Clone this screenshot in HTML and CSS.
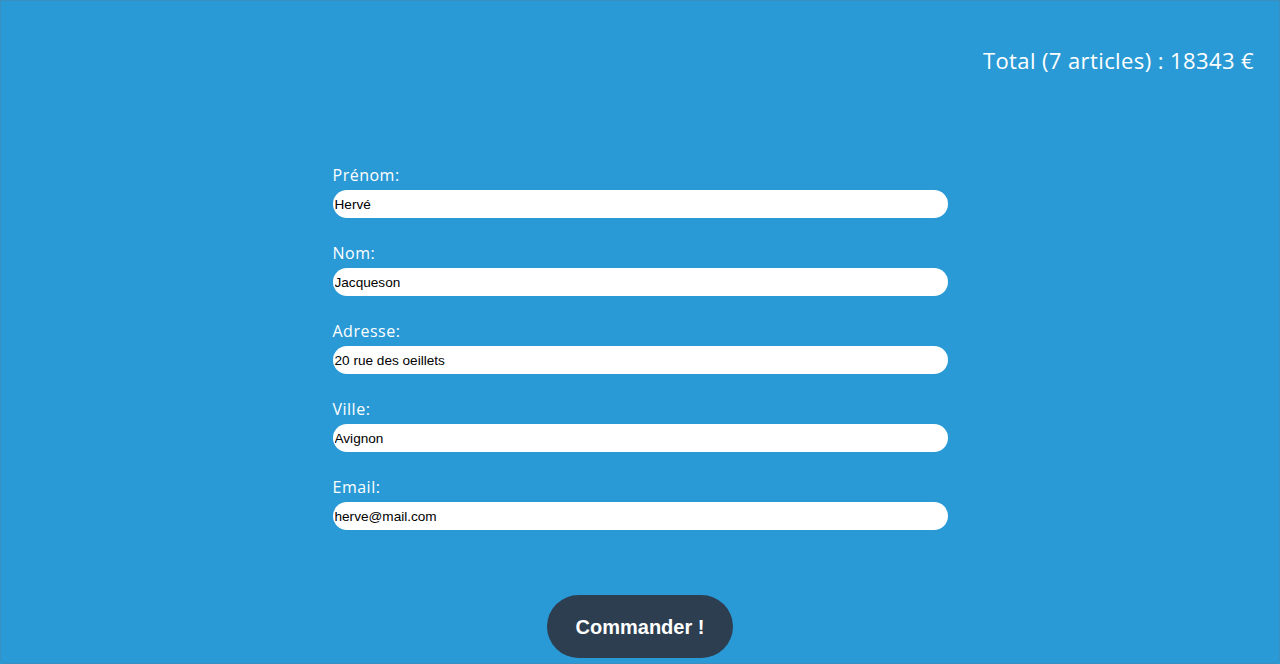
FILE: index.html
```html
<!DOCTYPE html>
<html lang="fr">
<head>
<meta charset="utf-8">
<title>Commande</title>
<link rel="stylesheet" href="styles.css">
</head>
<body>
<div class="page">
  <header class="summary">
    <p class="total">Total (7 articles) : 18343 €</p>
  </header>
  <form class="order-form">
    <div class="field">
      <label class="field-label" for="prenom">Prénom:</label>
      <input class="field-input" id="prenom" type="text" value="Hervé">
    </div>
    <div class="field">
      <label class="field-label" for="nom">Nom:</label>
      <input class="field-input" id="nom" type="text" value="Jacqueson">
    </div>
    <div class="field">
      <label class="field-label" for="adresse">Adresse:</label>
      <input class="field-input" id="adresse" type="text" value="20 rue des oeillets">
    </div>
    <div class="field">
      <label class="field-label" for="ville">Ville:</label>
      <input class="field-input" id="ville" type="text" value="Avignon">
    </div>
    <div class="field">
      <label class="field-label" for="email">Email:</label>
      <input class="field-input" id="email" type="email" value="herve@mail.com">
    </div>
    <div class="actions">
      <button class="submit" type="button">Commander !</button>
    </div>
  </form>
</div>
</body>
</html>
```
FILE: styles.css
```css
html, body {
  margin: 0;
  padding: 0;
  height: 100%;
}
body {
  background: #2a9ad6;
  font-family: "Open Sans", "DejaVu Sans", sans-serif;
  color: #ffffff;
  overflow: hidden;
}
.page {
  height: 100%;
  box-sizing: border-box;
  border: 1px solid #3b8fc0;
  border-radius: 0 0 6px 6px;
}
.summary {
  display: flex;
  justify-content: flex-end;
  padding: 44px 25px 0 0;
}
.total {
  margin: 0;
  font-size: 22px;
  line-height: 30px;
  font-weight: 400;
  letter-spacing: 0.4px;
}
.order-form {
  width: 615px;
  margin: 89px auto 0;
  display: flex;
  flex-direction: column;
  gap: 24px;
}
.field {
  display: flex;
  flex-direction: column;
  gap: 3px;
}
.field-label {
  font-size: 16px;
  line-height: 23px;
  letter-spacing: 0.5px;
}
.field-input {
  height: 28px;
  box-sizing: border-box;
  border: none;
  border-radius: 14px;
  background: #ffffff;
  padding: 1px 2px 0;
  font-family: "Liberation Sans", Arial, sans-serif;
  font-size: 13.6px;
  color: #000000;
  outline: none;
}
.actions {
  display: flex;
  justify-content: center;
  margin-top: 41px;
}
.submit {
  width: 186px;
  height: 63px;
  border: none;
  border-radius: 32px;
  background: #2c3e50;
  color: #ffffff;
  font-family: "Liberation Sans", Arial, sans-serif;
  font-size: 20px;
  font-weight: 700;
  padding-top: 2px;
  cursor: pointer;
}
```
